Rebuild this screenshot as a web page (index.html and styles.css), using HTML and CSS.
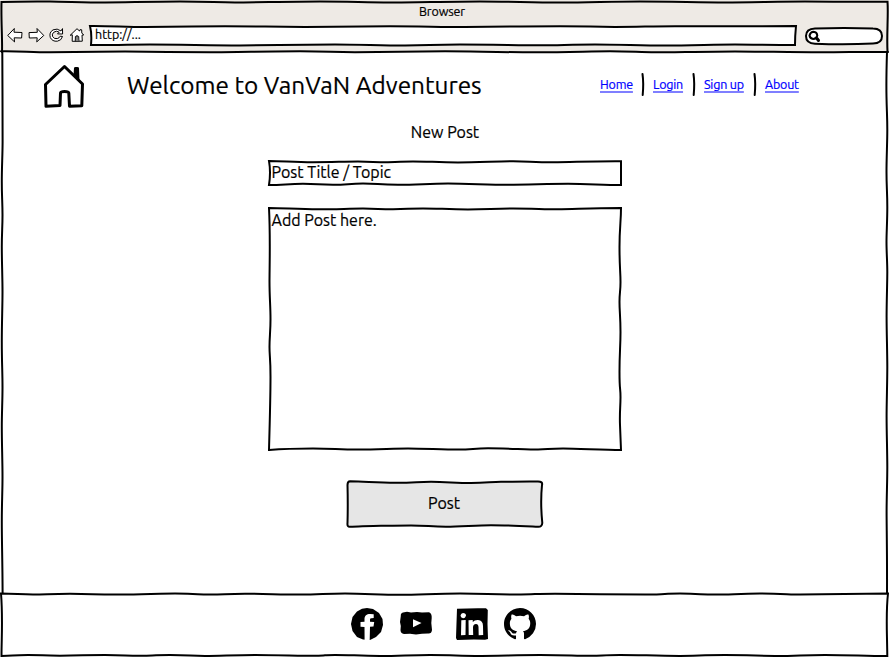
FILE: index.html
```html
<!DOCTYPE html>
<html lang="en">
<head>
<meta charset="utf-8">
<title>VanVaN Adventures</title>
<link rel="stylesheet" href="styles.css">
</head>
<body>
<div class="window">
  <header class="chrome">
    <svg class="frame" viewBox="0 0 889 52"><path d="M2 52C2.500 40 1 20 1.500 2C20 1.300 35 1.400 50 1.500S85 2.500 105 2.500S150 1.600 180 1.600S215 2.500 235 2.500S290 1.600 320 1.600S365 2.500 390 2.500S450 1.500 480 1.500S530 2.500 560 2.500S610 1.500 640 1.500S700 2.400 725 2.400S780 1.500 805 1.500S850 2 887.500 1.800C888.500 15 886.500 35 887.500 52"/><path d="M1 51.300C20 51 30 52.200 50 52.200S100 51.500 125 51.500S185 52.300 210 52.300S270 51.300 300 51.300S330 52.300 355 52.300S420 51.300 445 51.300S500 52.300 535 52.300S590 51.300 610 51.300S640 52.300 655 52.300S710 51.400 735 51.400S790 52.300 820 52.300S860 51.600 888 52"/></svg>
    <div class="title">Browser</div>
    <div class="toolbar">
      <svg class="tool" viewBox="0 0 16 16"><path d="M1 8.200L7.300 1.500L7 5.200L15 5.500L14.600 11L7.200 10.800L7.500 14.500Z"/></svg>
      <svg class="tool" viewBox="0 0 16 16"><path d="M15.500 8.200L9 1.500L9.300 5.300L1 5.600L1.300 11L9.200 10.800L8.800 14.500Z"/></svg>
      <svg class="tool" viewBox="0 0 16 16"><path d="M14.500 2L14.600 7L9.500 6.900L11.200 5.200Q8.500 3.200 5.800 5.200Q3.700 7 4.500 9.300Q6 12.300 9.300 11.600Q11.500 11 12.200 9.200L14.500 9.500Q13.400 13.500 9.400 14.200Q4.300 14.700 2.300 10.500Q.8 5.600 5 2.900Q9.200 .8 12.700 3.700Z"/></svg>
      <svg class="tool" viewBox="0 0 16 16"><path d="M1.500 8L8 1.700L10.500 4L11 2.700L12.700 2.800L12.800 6L14.700 8L13 8.200L13.300 14.200L3.200 14.300L3.300 8.200Z"/><path d="M6.300 14L6.400 9.500Q8 8 9.700 9.500L9.900 14M8 9V14"/></svg>
      <div class="address">
        <svg class="frame" viewBox="0 0 706 20"><path class="white" d="M0 0C20 -.2 35 1 55 1S110 .2 135 .2S190 .9 215 .9S270 .2 300 .2S350 1 375 1S440 .2 470 .2S500 .9 525 .9S560 .2 585 .2S640 .5 706 0Q705 10 705 19C680 19 665 18.500 645 18.500S600 19.500 575 19.500S530 18.500 505 18.500S470 19.300 450 19.300S400 18.500 370 18.500S340 19.500 315 19.500S270 18.500 245 18.500S180 19.400 150 19.400S90 18.500 60 18.500S20 19.500 1 19Q2 8 0 0Z"/></svg>
        <span>http://...</span>
      </div>
      <svg class="search" viewBox="0 0 78 18"><path class="white" d="M10 1.500Q39 .5 68 1.500Q77 1.500 77 9Q77 16.500 68 16.500Q40 18 10 16.700Q1 16.500 1 9Q1 1.800 10 1.500Z"/><path d="M8.500 4.800Q12 5 12.300 8.500Q11.500 12 8.200 12Q5 11.500 4.500 8.500Q5.500 5 8.500 4.800Z"/><path class="handle" d="M12 11.500L13.500 13.500"/></svg>
    </div>
  </header>

  <main class="page">
    <svg class="frame" viewBox="0 0 889 541"><path d="M2.300 0C2.300 15 2.700 75 2.600 90S1.800 115 1.800 130S2.500 150 2.500 163S1.800 180 1.800 195S2.500 225 2.500 240S1.800 270 1.800 290S2.500 320 2.500 335S1.800 360 1.800 375S2.500 410 2.500 425S1.800 450 1.800 470S2.500 510 2.600 541M887 0C886.200 25 886.200 30 886.500 45S887.300 65 887.300 78S886.500 105 886.500 120S887.300 140 887.300 155S886.500 180 886.500 190S887.300 210 887.300 220S886.600 250 886.600 265S887.300 300 887.300 315S886.600 350 886.600 365S887.300 400 887.300 415S886.600 445 886.600 460S887.200 500 887 541"/></svg>
    <div class="masthead">
      <svg class="home" viewBox="0 0 42 44"><path d="M2.500 20.500L21.500 2.500L39.500 20L38.800 41.800L26.500 42.200L25.800 29Q25.500 27.500 21.500 27.500Q17.800 27.500 17.500 29L17 41.500L3 42.300Z"/><path class="ink" d="M31 4Q31.200 2.800 33 3Q35.800 2.500 36 4L36.500 17L30.500 11.500Z"/></svg>
      <h1>Welcome to VanVaN Adventures</h1>
      <nav>
        <a class="w-home" href="#">Home</a>
        <svg class="rule" viewBox="0 0 4 24"><path d="M1.500 1Q2.800 10 1.700 22"/></svg>
        <a class="w-login" href="#">Login</a>
        <svg class="rule" viewBox="0 0 4 24"><path d="M1.500 1Q2.800 10 1.700 22"/></svg>
        <a class="w-signup" href="#">Sign up</a>
        <svg class="rule last" viewBox="0 0 4 24"><path d="M1.500 1Q2.800 10 1.700 22"/></svg>
        <a class="w-about" href="#">About</a>
      </nav>
    </div>
    <form class="post">
      <h2>New Post</h2>
      <div class="field topic">
        <svg class="frame" viewBox="0 0 354 26"><path d="M1 1C15 1 25 2.200 45 2.200S75 1.500 90 1.500S105 2.300 120 2.300S130 1.400 145 1.400S170 2.400 190 2.400S230 1.300 245 1.300S265 2.200 285 2.200S320 1 353 1.200L353 25C335 25 320 23.800 300 23.800S260 24.700 240 24.700S200 23.600 180 23.600S150 24.700 130 24.700S110 23.600 95 23.600S80 24.700 65 24.700S50 23.800 35 23.800S15 25 1 25Q3 12 1 1Z"/></svg>
        <span>Post Title / Topic</span>
      </div>
      <div class="field entry">
        <svg class="frame" viewBox="0 0 354 244"><path d="M1 1C15 1 30 2.300 50 2.300S80 1.600 95 1.600S110 2.300 125 2.300S140 1.400 155 1.400S180 2.400 200 2.400S225 1.500 245 1.500S275 2.300 290 2.300S320 1.200 353 1C353 15 351.500 20 351.500 40S352.500 65 352.500 75S351.500 85 351.500 95S352.500 110 352.500 125S351.500 145 351.500 165S352.500 180 352.500 190S351.500 205 352 218L353 243C335 243 310 241.500 295 241.500S280 242.500 270 242.500S235 241.300 220 241.300S205 242.500 190 242.500S155 241.400 140 241.400S110 242.500 90 242.500S65 241.500 45 241.500S20 241.500 1 243C1.500 225 2.500 190 2.500 170S1.500 150 1.500 140S2.500 125 2.500 112S1.500 90 1.500 75S2.500 30 1 1Z"/></svg>
        <span>Add Post here.</span>
      </div>
      <div class="submit">
        <svg class="frame" viewBox="0 0 198 48"><path class="grey" d="M4 1.300C20 1.500 30 2.800 50 2.800S70 1.800 85 1.800S110 3 125 3S145 1.800 155 1.800S175 1.200 192 1.500Q197 1.500 196 5C195 15 195 30 196.300 43Q196 47 192 46.800C175 46 160 45.200 145 45.200S115 46.700 100 46.700S80 45.500 65 45.500S45 45.800 35 45.800S15 46.500 4 46.800Q1 47 1.500 43Q2 25 1.500 5Q1.500 1.300 4 1.300Z"/></svg>
        <span>Post</span>
      </div>
    </form>
  </main>

  <footer class="footer">
    <svg class="frame" viewBox="0 0 889 64"><path d="M1 .5C15 .5 20 1.500 33 1.500S50 .7 70 .7S95 1.600 115 1.600S150 .6 175 .6S195 1.600 210 1.600S225 .7 245 .7S280 1.600 300 1.600S325 .6 345 .6S380 1.700 400 1.700S435 .6 460 .6S490 1.500 515 1.500S530 .7 555 .7S620 1.600 645 1.600S660 .6 680 .6S700 1.600 715 1.600S740 .6 760 .6S790 1.500 800 1.500S830 1.300 888 .5C885.700 20 887 35 887.300 63C865 63 850 61.900 825 61.900S800 62.900 775 62.900S745 61.900 725 61.900S705 62.900 680 62.900S640 61.900 620 61.900S605 62.800 590 62.800S565 62 540 62S500 62.900 475 62.900S450 61.900 430 61.900S400 62.900 380 62.900S350 61.900 335 61.900S330 62.800 315 62.800S275 61.900 255 61.900S220 62.900 205 62.900S190 62 170 62S155 62.800 140 62.800S125 61.900 105 61.900S80 62.800 60 62.800S45 61.900 28 61.900S15 62.800 1.500 63C1.500 45 3 25 1 .5Z"/></svg>
    <svg class="social" viewBox="0 0 32 32"><path class="ink" d="M16 0L22 1L28 5L31.500 11L32 17L30 24L25 29L19 32L12 31.500L6 29L1.500 23L0 16L1.500 9L6 3.500L11 .8Z"/><path class="cut" d="M13.600 32L13.500 19L9.500 18.700L9.500 14L13.500 13.700V11.500C13.500 7.500 15.700 6 19 6L22.700 6.300V10L20.500 10.200C19.300 10.200 19 10.800 19 12V13.700L23.200 14L22.500 18.600L19 18.700L18.700 32Z"/></svg>
    <svg class="social" viewBox="0 0 32 32"><path class="ink" d="M3 4.500L7 3.800L11 4.500L17 4L22 4.500L29 4.300Q32 5.500 31.700 10L31.300 15L32 22Q31.500 26 28 25.500L22 25.800L16 26.500L10 25.700L4 26Q.5 25.500 .5 22L.8 18L0 14L.8 8Q.5 5 3 4.500Z"/><path class="cut" d="M13 11.200L21.500 15L13 19.200Z"/></svg>
    <svg class="social linkedin" viewBox="0 0 32 32"><path class="ink" d="M1 .8Q15 0 30 .3L31.800 2L31.500 16L32 31L29 31.700Q16 31 1 32L0 30L.5 15Z"/><path class="cut" d="M7 5Q10 5 10 7.800Q9 10.500 7 10.300Q4.500 9.800 4.500 7.500Q5 5 7 5ZM5.300 12.300L9.700 12L9.500 27L5 27.300ZM12.500 12.200L16.700 12L16.800 14Q18.500 11.800 22 12Q27 12.300 27 18L27.200 27L22.700 27.200L22.500 19Q22.300 16 20 16Q17 16 17 19.500L17.200 27L12.700 27Z"/></svg>
    <svg class="social" viewBox="0 0 16 16"><path class="ink" d="M8 0C3.580 0 0 3.580 0 8c0 3.540 2.290 6.530 5.470 7.590.4.070.55-.17.55-.38 0-.19-.01-.82-.01-1.490-2.010.37-2.530-.49-2.690-.94-.09-.23-.48-.94-.82-1.130-.28-.15-.68-.52-.01-.53.63-.01 1.080.58 1.230.82.72 1.210 1.870.87 2.330.66.070-.52.280-.87.510-1.070-1.780-.2-3.640-.89-3.640-3.950 0-.87.310-1.590.820-2.150-.08-.2-.36-1.020.080-2.120 0 0 .67-.21 2.200.82.640-.18 1.320-.27 2-.27s1.360.090 2 .27c1.530-1.040 2.200-.82 2.200-.82.440 1.100.160 1.920.080 2.120.510.560.820 1.270.820 2.150 0 3.070-1.870 3.750-3.650 3.950.290.250.540.730.540 1.480 0 1.070-.01 1.930-.01 2.200 0 .21.150.460.550.380A8.010 8.010 0 0 0 16 8c0-4.420-3.580-8-8-8"/></svg>
  </footer>
</div>
</body>
</html>
```
FILE: styles.css
```css
* { box-sizing: border-box; }
body {
  margin: 0;
  background: #fff;
  color: #000;
  font-family: Ubuntu, "Noto Sans", sans-serif;
  -webkit-text-stroke: .2px currentColor;
}
.window {
  width: 889px;
  height: 657px;
  display: grid;
  grid-template-rows: 52px 541px 64px;
}
svg {
  display: block;
  flex: none;
  overflow: visible;
  fill: none;
  stroke: #000;
  stroke-width: 2;
  stroke-linecap: round;
  stroke-linejoin: round;
}
.frame {
  position: absolute;
  inset: 0;
  width: 100%;
  height: 100%;
  stroke-linejoin: miter;
}
.white { fill: #fff; }
.grey { fill: #e6e6e6; }
.ink { fill: #000; stroke: none; }
.cut { fill: #fff; stroke: none; }
.handle { stroke-width: 3; }
span { position: relative; }

.chrome { position: relative; background: #eeeae5; }
.title {
  height: 26px;
  padding: 3px 5px 0 0;
  text-align: center;
  font-size: 12.500px;
  letter-spacing: -.1px;
  line-height: 17px;
}
.toolbar { display: flex; padding-left: 7px; }
.tool { width: 16px; height: 16px; margin: 1px 4.500px 0 0; stroke-width: 1; fill: #fff; }
.address {
  position: relative;
  width: 706px;
  height: 20px;
  margin-left: 1px;
  padding-left: 5px;
  font-size: 12.500px;
  line-height: 17px;
}
.search { width: 78px; height: 18px; margin: 1px 0 0 9px; }

.page { position: relative; }
.masthead { position: relative; display: flex; height: 68px; padding: 12px 0 0 43px; }
.home { width: 42px; height: 44px; stroke-width: 3; }
h1, h2 { margin: 0; font-weight: 400; white-space: nowrap; }
h1 { width: 473px; padding-left: 42px; font-size: 24.350px; line-height: 43px; }
nav { display: flex; font-size: 12.500px; letter-spacing: -.2px; line-height: 41px; white-space: nowrap; padding-left: 42px; }
nav a { color: #00f; text-decoration-color: #7f7fff; text-decoration-thickness: 2px; text-underline-offset: 2px; text-decoration-skip-ink: none; }
.rule { width: 4px; height: 24px; margin: 9px 8px 0 9px; }
.w-home { width: 32px; }
.w-login { width: 30px; }
.w-signup { width: 41px; }
.w-about { width: 35px; }
.last { margin-left: 8px; }

.post { position: relative; display: flex; flex-direction: column; align-items: center; font-size: 16px; }
h2 { height: 40px; padding-left: 1px; font-size: 16px; line-height: 24px; }
.field { position: relative; width: 354px; padding-left: 4px; line-height: 24px; }
.topic { height: 26px; }
.entry { height: 244px; margin-top: 21px; line-height: 26px; }
.submit { position: relative; width: 198px; height: 48px; margin-top: 29px; padding-right: 1px; text-align: center; line-height: 47px; }

.footer { position: relative; display: flex; padding: 15px 0 0 351px; gap: 17px; }
.social { width: 32px; height: 32px; }
.linkedin { margin-left: 7px; margin-right: -1px; }
```
